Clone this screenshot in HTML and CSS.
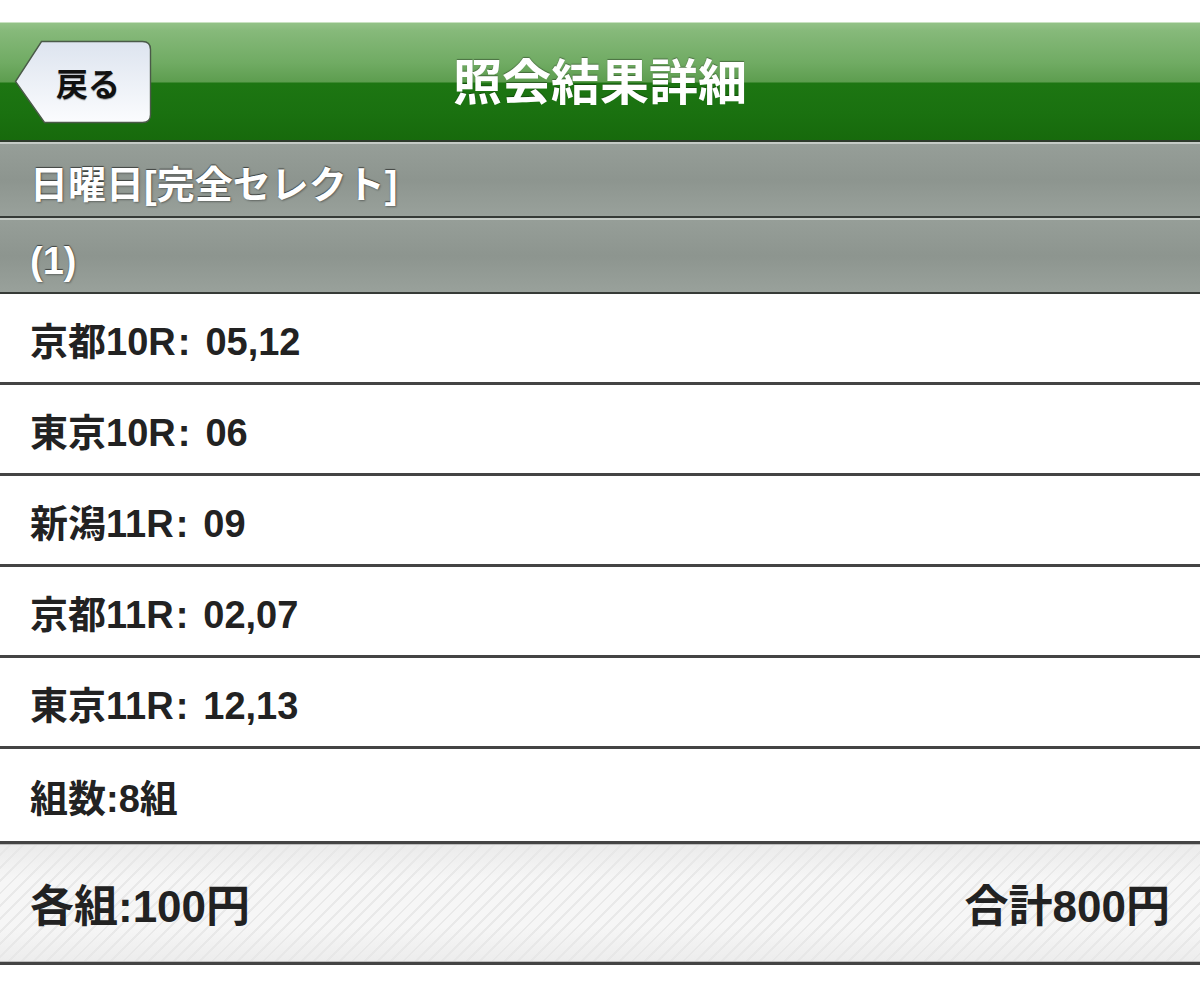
FILE: index.html
```html
<!DOCTYPE html>
<html lang="ja">
<head>
<meta charset="utf-8">
<title>照会結果詳細</title>
<link rel="stylesheet" href="styles.css">
</head>
<body>
<div class="page">
  <div class="topgap"></div>
  <header class="navbar">
    <div class="nav-left">
      <a class="back-btn" href="#">
        <svg class="back-shape" viewBox="0 0 138 84" preserveAspectRatio="none" aria-hidden="true">
          <defs>
            <linearGradient id="bg" x1="0" y1="0" x2="0" y2="1">
              <stop offset="0" stop-color="#dde4ef"/>
              <stop offset="1" stop-color="#fbfcfe"/>
            </linearGradient>
          </defs>
          <path d="M27.5,1.5 H128.5 Q136.5,1.5 136.5,9.5 V74.5 Q136.5,82.5 128.5,82.5 H30.5 L1.5,41.5 Z" fill="url(#bg)" stroke="#4a5a48" stroke-width="1.4"/>
        </svg>
        <span class="back-label">戻る</span>
      </a>
    </div>
    <h1 class="nav-title">照会結果詳細</h1>
    <div class="nav-right"></div>
  </header>

  <div class="group-bar">日曜日[完全セレクト]</div>
  <div class="group-bar sub">(1)</div>

  <ul class="rows">
    <li class="row"><span class="row-text">京都10R<span class="sep">:</span>05,12</span></li>
    <li class="row"><span class="row-text">東京10R<span class="sep">:</span>06</span></li>
    <li class="row"><span class="row-text">新潟11R<span class="sep">:</span>09</span></li>
    <li class="row"><span class="row-text">京都11R<span class="sep">:</span>02,07</span></li>
    <li class="row"><span class="row-text">東京11R<span class="sep">:</span>12,13</span></li>
    <li class="row last"><span class="row-text">組数:8組</span></li>
  </ul>

  <div class="total-bar">
    <span class="total-each">各組:100円</span>
    <span class="total-sum">合計800円</span>
  </div>
</div>
</body>
</html>
```

FILE: styles.css
```css
* { box-sizing: border-box; }

html, body {
  margin: 0;
  padding: 0;
  background: #ffffff;
}

body {
  font-family: "Liberation Sans", "Noto Sans CJK JP", sans-serif;
  font-weight: bold;
  color: #222222;
}

.page {
  width: 1200px;
}

.topgap {
  height: 22px;
  background: #ffffff;
}

.navbar {
  height: 120px;
  display: grid;
  grid-template-columns: 1fr auto 1fr;
  align-items: center;
  border-top: 1px solid #c9e2c2;
  border-bottom: 2px solid #2e3a2c;
  background: linear-gradient(to bottom,
    #93c287 0px,
    #86b97a 8px,
    #70ab63 40px,
    #5d9d4f 59px,
    #1d7612 60px,
    #1a7110 90px,
    #176a0c 117px);
}

.nav-left {
  padding-left: 14px;
  display: flex;
  align-items: center;
}

.back-btn {
  position: relative;
  width: 138px;
  height: 84px;
  display: flex;
  align-items: center;
  padding-left: 42px;
  text-decoration: none;
}

.back-shape {
  position: absolute;
  left: 0;
  top: 0;
  width: 138px;
  height: 84px;
}

.back-label {
  position: relative;
  font-size: 32px;
  color: #111111;
  text-shadow: 0 1px 1px rgba(0,0,0,0.35);
}

.nav-title {
  margin: 0;
  padding-top: 3px;
  font-size: 49px;
  font-weight: bold;
  color: #ffffff;
  line-height: 1;
  text-shadow: 0 -1px 1px rgba(0,0,0,0.35);
}

.group-bar {
  height: 76px;
  display: flex;
  align-items: center;
  padding-left: 30px;
  padding-top: 3px;
  font-size: 38px;
  color: #ffffff;
  text-shadow: 0 -1px 1px rgba(0,0,0,0.55), 1px 1px 2px rgba(0,0,0,0.35);
  border-top: 2px solid #c5cbc6;
  border-bottom: 2px solid #363b37;
  background: linear-gradient(to bottom, #969e98 0%, #8d958f 50%, #99a19b 100%);
}

.group-bar.sub {
  padding-top: 10px;
}

.rows {
  list-style: none;
  margin: 0;
  padding: 0;
}

.row {
  height: 91px;
  display: flex;
  align-items: center;
  padding-left: 30px;
  font-size: 38px;
  color: #222222;
  border-bottom: 3px solid #444444;
  background: #ffffff;
}

.row-text .sep {
  margin: 0 15px 0 2px;
}

.row.last {
  height: 92px;
  border-bottom: none;
}

.total-bar {
  height: 124px;
  display: flex;
  justify-content: space-between;
  align-items: center;
  padding: 0 30px 0 30px;
  font-size: 44px;
  color: #222222;
  border-top: 3px solid #444444;
  border-bottom: 3px solid #444444;
  box-shadow: inset 0 1px 0 #bdbdbd, inset 0 -1px 0 #bdbdbd;
  background:
    linear-gradient(to bottom, rgba(230,230,230,0.7) 0%, rgba(255,255,255,0) 30%, rgba(255,255,255,0) 70%, rgba(230,230,230,0.6) 100%),
    repeating-linear-gradient(135deg, #f6f6f6 0px, #f6f6f6 7px, #e9e9e9 7px, #e9e9e9 9px);
}
```
